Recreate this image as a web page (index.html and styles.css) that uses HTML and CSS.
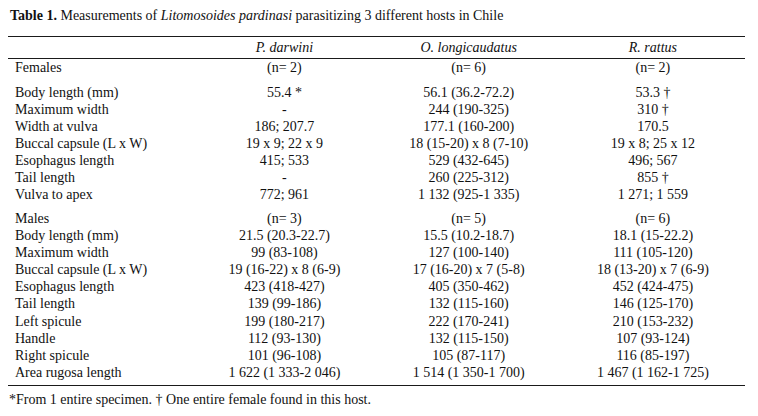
FILE: index.html
```html
<!DOCTYPE html>
<html>
<head>
<meta charset="utf-8">
<link rel="stylesheet" href="styles.css">
</head>
<body>
<div class="page">
  <div class="caption"><b>Table 1.</b> Measurements of <i>Litomosoides pardinasi</i> parasitizing 3 different hosts in Chile</div>
  <table class="tbl">
    <thead>
      <tr class="head">
        <th></th>
        <th><i>P. darwini</i></th>
        <th><i>O. longicaudatus</i></th>
        <th><i>R. rattus</i></th>
      </tr>
    </thead>
    <tbody>
      <tr class="group first"><td>Females</td><td>(n= 2)</td><td>(n= 6)</td><td>(n= 2)</td></tr>
      <tr><td>Body length (mm)</td><td>55.4 *</td><td>56.1 (36.2-72.2)</td><td>53.3 †</td></tr>
      <tr><td>Maximum width</td><td>-</td><td>244 (190-325)</td><td>310 †</td></tr>
      <tr><td>Width at vulva</td><td>186; 207.7</td><td>177.1 (160-200)</td><td>170.5</td></tr>
      <tr><td>Buccal capsule (L x W)</td><td>19 x 9; 22 x 9</td><td>18 (15-20) x 8 (7-10)</td><td>19 x 8; 25 x 12</td></tr>
      <tr><td>Esophagus length</td><td>415; 533</td><td>529 (432-645)</td><td>496; 567</td></tr>
      <tr><td>Tail length</td><td>-</td><td>260 (225-312)</td><td>855 †</td></tr>
      <tr><td>Vulva to apex</td><td>772; 961</td><td>1 132 (925-1 335)</td><td>1 271; 1 559</td></tr>
      <tr class="group second"><td>Males</td><td>(n= 3)</td><td>(n= 5)</td><td>(n= 6)</td></tr>
      <tr><td>Body length (mm)</td><td>21.5 (20.3-22.7)</td><td>15.5 (10.2-18.7)</td><td>18.1 (15-22.2)</td></tr>
      <tr><td>Maximum width</td><td>99 (83-108)</td><td>127 (100-140)</td><td>111 (105-120)</td></tr>
      <tr><td>Buccal capsule (L x W)</td><td>19 (16-22) x 8 (6-9)</td><td>17 (16-20) x 7 (5-8)</td><td>18 (13-20) x 7 (6-9)</td></tr>
      <tr><td>Esophagus length</td><td>423 (418-427)</td><td>405 (350-462)</td><td>452 (424-475)</td></tr>
      <tr><td>Tail length</td><td>139 (99-186)</td><td>132 (115-160)</td><td>146 (125-170)</td></tr>
      <tr><td>Left spicule</td><td>199 (180-217)</td><td>222 (170-241)</td><td>210 (153-232)</td></tr>
      <tr><td>Handle</td><td>112 (93-130)</td><td>132 (115-150)</td><td>107 (93-124)</td></tr>
      <tr><td>Right spicule</td><td>101 (96-108)</td><td>105 (87-117)</td><td>116 (85-197)</td></tr>
      <tr class="last"><td>Area rugosa length</td><td>1 622 (1 333-2 046)</td><td>1 514 (1 350-1 700)</td><td>1 467 (1 162-1 725)</td></tr>
    </tbody>
  </table>
  <div class="note">*From 1 entire specimen. † One entire female found in this host.</div>
</div>
</body>
</html>
```
FILE: styles.css
```css
html, body {
  margin: 0;
  padding: 0;
  background: #ffffff;
}
body {
  font-family: "Liberation Serif", "Times New Roman", serif;
  font-size: 14px;
  color: #111111;
}
.page {
  padding: 7px 0 0 8px;
  width: 737px;
}
.caption {
  padding-left: 2px;
  line-height: 17px;
  height: 29px;
}
.tbl {
  width: 737px;
  border-collapse: collapse;
  table-layout: fixed;
}
.tbl th,
.tbl td {
  padding: 0;
  line-height: 17.1px;
  text-align: center;
  white-space: nowrap;
}
.tbl td:first-child,
.tbl th:first-child {
  text-align: left;
  padding-left: 7px;
}
.tbl th {
  font-weight: normal;
  height: 21px;
  border-top: 1px solid #1a1a1a;
  border-bottom: 1px solid #1a1a1a;
}
.tbl .first td {
  padding-bottom: 7.5px;
}
.tbl .second td {
  padding-top: 6.7px;
}
.tbl .last td {
  padding-bottom: 4px;
  border-bottom: 1px solid #1a1a1a;
}
.note {
  padding: 5px 0 0 1px;
  line-height: 17px;
}
```
